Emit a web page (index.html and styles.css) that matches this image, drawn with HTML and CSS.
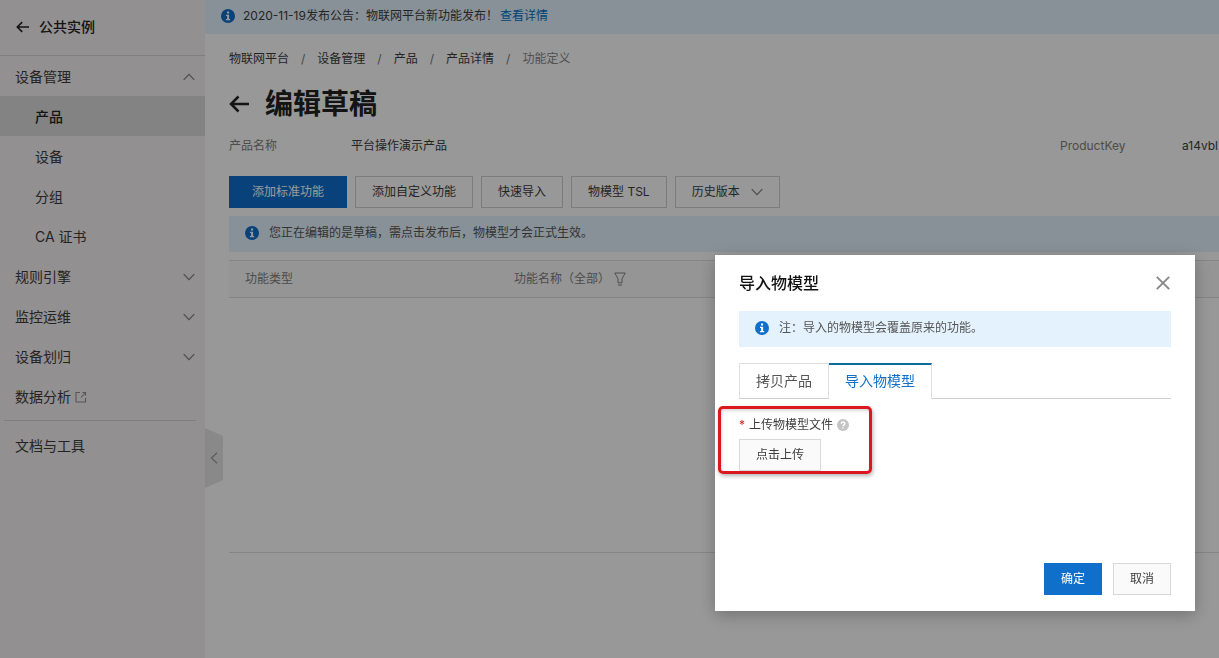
FILE: index.html
```html
<!DOCTYPE html>
<html lang="zh-CN">
<head>
<meta charset="utf-8">
<meta name="viewport" content="width=device-width, initial-scale=1">
<title>编辑草稿</title>
<link rel="stylesheet" href="styles.css">
</head>
<body>
<svg class="defs" aria-hidden="true">
  <symbol id="info" viewBox="0 0 14 14"><circle cx="7" cy="7" r="7" fill="#0f6fcb"/><path d="M6 2.600h2.100v1.900H6zM5 5.700h3.100v4.200h1.100v1.300H4.900V9.900h1.200V7H5z" fill="#fff"/></symbol>
  <symbol id="down" viewBox="0 0 12 8"><path d="M.7 1.2 6 6.6l5.300-5.400" fill="none" stroke="currentColor" stroke-width="1.200"/></symbol>
  <symbol id="up" viewBox="0 0 12 8"><path d="M.7 6.800 6 1.400l5.300 5.400" fill="none" stroke="currentColor" stroke-width="1.200"/></symbol>
  <symbol id="back" viewBox="0 0 20 18"><path d="M1.500 9H20M9.500 1.500 2 9l7.500 7.500" fill="none" stroke="currentColor" stroke-width="2.500"/></symbol>
</svg>
<div class="app">
  <aside class="sidebar">
    <header class="side-head"><a class="back" href="#"><svg class="back-small"><use href="#back"/></svg>公共实例</a></header>
    <nav class="menu">
      <button class="item">设备管理<svg class="chev"><use href="#up"/></svg></button>
      <a class="item sub active" href="#">产品</a>
      <a class="item sub" href="#">设备</a>
      <a class="item sub" href="#">分组</a>
      <a class="item sub" href="#">CA 证书</a>
      <button class="item">规则引擎<svg class="chev"><use href="#down"/></svg></button>
      <button class="item">监控运维<svg class="chev"><use href="#down"/></svg></button>
      <button class="item">设备划归<svg class="chev"><use href="#down"/></svg></button>
      <a class="item" href="#">数据分析<svg class="ext" viewBox="0 0 12 12"><path d="M5 1.500H1v9.500h9.500V7M7.500 1.500H11M10.500 1v3.500M10.500 1.500 6 6.500" fill="none" stroke="currentColor" stroke-width="1.100"/></svg></a>
      <hr class="rule">
      <a class="item" href="#">文档与工具</a>
    </nav>
    <button class="collapse" aria-label="收起菜单"><svg viewBox="0 0 8 12"><path d="M7 .7 1.500 6 7 11.300" fill="none" stroke="currentColor" stroke-width="1.200"/></svg></button>
  </aside>
  <main class="main">
    <div class="announce"><svg class="info"><use href="#info"/></svg><span>2020-11-19发布公告：物联网平台新功能发布！<a href="#">查看详情</a></span></div>
    <div class="content">
      <nav class="crumbs"><a href="#">物联网平台</a><i>/</i><a href="#">设备管理</a><i>/</i><a href="#">产品</a><i>/</i><a href="#">产品详情</a><i>/</i><span>功能定义</span></nav>
      <h1 class="title"><a href="#" aria-label="返回"><svg class="back-big"><use href="#back"/></svg></a>编辑草稿</h1>
      <dl class="facts">
        <div class="fact"><dt>产品名称</dt><dd>平台操作演示产品</dd></div>
        <div class="fact"><dt>ProductKey</dt><dd>a14vbl</dd></div>
      </dl>
      <div class="toolbar">
        <button class="btn primary wide">添加标准功能</button>
        <button class="btn">添加自定义功能</button>
        <button class="btn">快速导入</button>
        <button class="btn">物模型 TSL</button>
        <button class="btn">历史版本<svg class="chev"><use href="#down"/></svg></button>
      </div>
      <div class="notice"><svg class="info"><use href="#info"/></svg>您正在编辑的是草稿，需点击发布后，物模型才会正式生效。</div>
      <div class="table-area">
        <table class="table">
          <thead><tr><th class="col-type">功能类型</th><th>功能名称（全部）<svg class="filter" viewBox="0 0 12 14"><path d="M.8 1h10.400L8 6.800v4H4v-4zM4 13h4" fill="none" stroke="currentColor"/></svg></th></tr></thead>
        </table>
      </div>
    </div>
  </main>
</div>
<div class="overlay">
  <section class="dialog" role="dialog" aria-labelledby="dialog-title">
    <header class="dialog-head"><h2 id="dialog-title">导入物模型</h2><button class="close" aria-label="关闭"><svg viewBox="0 0 14 14"><path d="m.8.8 12.400 12.400M13.200.8.8 13.200" stroke="currentColor" stroke-width="1.900"/></svg></button></header>
    <div class="notice"><svg class="info"><use href="#info"/></svg>注：导入的物模型会覆盖原来的功能。</div>
    <div class="tabs" role="tablist"><button class="tab" role="tab">拷贝产品</button><button class="tab current" role="tab" aria-selected="true">导入物模型</button></div>
    <div class="field">
      <label class="label" for="upload"><b>*</b>上传物模型文件<svg class="help" viewBox="0 0 12 12"><circle cx="6" cy="6" r="6" fill="#c4c4c4"/><path d="M4.200 4.800c0-2.400 3.700-2.300 3.700-.2C7.900 5.800 6 6 6 7.300M6 8.300v1.300" fill="none" stroke="#fff" stroke-width="1.300"/></svg></label>
      <button class="btn" id="upload">点击上传</button>
      <span class="highlight"></span>
    </div>
    <footer class="dialog-foot"><button class="btn primary">确定</button><button class="btn">取消</button></footer>
  </section>
</div>
</body>
</html>
```
FILE: styles.css
```css
* { box-sizing: border-box; }
body { margin: 0; color: #3c3c3c; font: 12px/18px Inter, "Noto Sans CJK SC", sans-serif; }
a { color: inherit; text-decoration: none; }
button { margin: 0; font: inherit; color: inherit; cursor: pointer; }
svg { display: block; flex: none; }
.defs { position: absolute; width: 0; height: 0; }

.app { display: flex; min-height: 100vh; overflow: hidden; }
.sidebar { position: relative; flex: none; width: 205px; background: #f3f0f1; font-size: 14px; line-height: 20px; }
.side-head { height: 56px; padding: 17px 16px; border-bottom: 1px solid #d5d3d4; font-weight: 500; color: #222; }
.back { display: flex; align-items: center; gap: 10px; }
.back-small { width: 13px; height: 12px; }
.item { display: flex; align-items: center; width: 100%; height: 40px; padding: 2px 10px 0 15px; border: 0; background: none; text-align: left; }
.sub { padding-left: 35px; }
.active { background: #d9dad9; font-weight: 500; color: #222; }
.chev { width: 12px; height: 8px; color: #808080; }
.item .chev { margin-left: auto; }
.ext { width: 12px; height: 12px; margin-left: 4px; color: #909090; }
.rule { margin: 4px 9px 4px 4px; border: 0; border-top: 1px solid #d5d3d4; }
.collapse { position: absolute; left: 100%; top: 428px; display: flex; align-items: center; width: 18px; height: 60px; padding: 0 5px; border: 0; background: #e4e4e4; color: #999; clip-path: polygon(0 0, 100% 8px, 100% 52px, 0 100%); }
.collapse svg { width: 8px; height: 12px; }

.main { flex: 1; min-width: 0; background: #fdfdfd; }
.info { width: 14px; height: 14px; }
.announce { display: flex; align-items: center; gap: 8px; height: 34px; padding: 0 16px 2px; background: #e4f2fd; }
.announce a { margin-left: 2px; color: #0070cc; }
.content { padding: 16px 0 0 24px; }
.crumbs { display: flex; gap: 12px; }
.crumbs i { font-style: normal; color: #777; }
.crumbs span { color: #888; }
.title { display: flex; align-items: center; gap: 16px; margin: 16px 0 13px; font-size: 28px; line-height: 40px; font-weight: 600; color: #222; }
.back-big { width: 20px; height: 18px; }
.facts { display: flex; margin: 0 0 21px; white-space: nowrap; }
.fact { display: flex; flex: none; width: 831px; }
.fact dt { width: 122px; color: #808080; }
.fact dd { margin: 0; }
.toolbar { display: flex; gap: 8px; }
.btn { display: flex; align-items: center; gap: 11px; height: 32px; padding: 0 16px; border: 1px solid #d8d8d8; background: #fafafa; white-space: nowrap; }
.toolbar .btn { border-color: #cfcfcf; background: none; }
.btn.primary, .toolbar .primary { border-color: #0f6fcb; background: #0f6fcb; color: #fff; }
.btn.wide { padding: 0 22px; }
.notice { display: flex; align-items: center; gap: 10px; height: 36px; padding: 0 16px 2px; background: #e4f2fd; color: #555; }
.content .notice { margin-top: 8px; }
.table-area { min-height: 293px; margin-top: 8px; border-bottom: 1px solid #dedede; }
.table { width: 100%; border-collapse: collapse; }
.table th { height: 37px; padding: 0 16px; border: solid #dedede; border-width: 1px 0; background: #f8f8f8; color: #808080; font-weight: 400; text-align: left; }
.col-type { width: 269px; }
.filter { display: inline-block; width: 12px; height: 14px; margin-left: 4px; vertical-align: -3px; }

.overlay { position: fixed; inset: 0; display: flex; align-items: flex-end; justify-content: flex-end; padding: 24px 24px 47px; background: rgba(0, 0, 0, .4); }
.dialog { display: flex; flex-direction: column; width: 480px; min-height: 356px; padding: 16px 24px; background: #fff; box-shadow: 0 4px 16px rgba(0, 0, 0, .25); }
.dialog-head { display: flex; align-items: center; justify-content: space-between; height: 24px; margin-bottom: 16px; }
.dialog-head h2 { margin: 0; font-size: 16px; line-height: 24px; font-weight: 500; color: #111; }
.close { padding: 1px; border: 0; background: none; color: #888; }
.close svg { width: 14px; height: 14px; }
.tabs { display: flex; height: 36px; margin-top: 16px; font-size: 14px; box-shadow: inset 0 -1px #d0d0d0; }
.tab { padding: 0 16px; border: 1px solid #dedede; border-bottom-color: #d0d0d0; background: #fff; color: #555; }
.tab.current { padding-bottom: 2px; border-top: 2px solid #0d6a9c; border-bottom-color: #fff; border-left: 0; color: #0f6fcb; }
.field { position: relative; margin-top: 17px; }
.label { display: flex; align-items: center; margin-bottom: 5px; }
.label b { width: 10px; font-weight: 400; color: #e02020; }
.help { width: 12px; height: 12px; margin-left: 4px; }
.highlight { position: absolute; left: -21px; top: -10px; width: 154px; height: 68px; border: 3px solid #d9191f; border-radius: 5px; box-shadow: 1px 2px 4px rgba(0, 0, 0, .3), inset 1px 2px 3px rgba(0, 0, 0, .15); pointer-events: none; }
.dialog-foot { display: flex; justify-content: flex-end; gap: 11px; margin-top: auto; }
```
